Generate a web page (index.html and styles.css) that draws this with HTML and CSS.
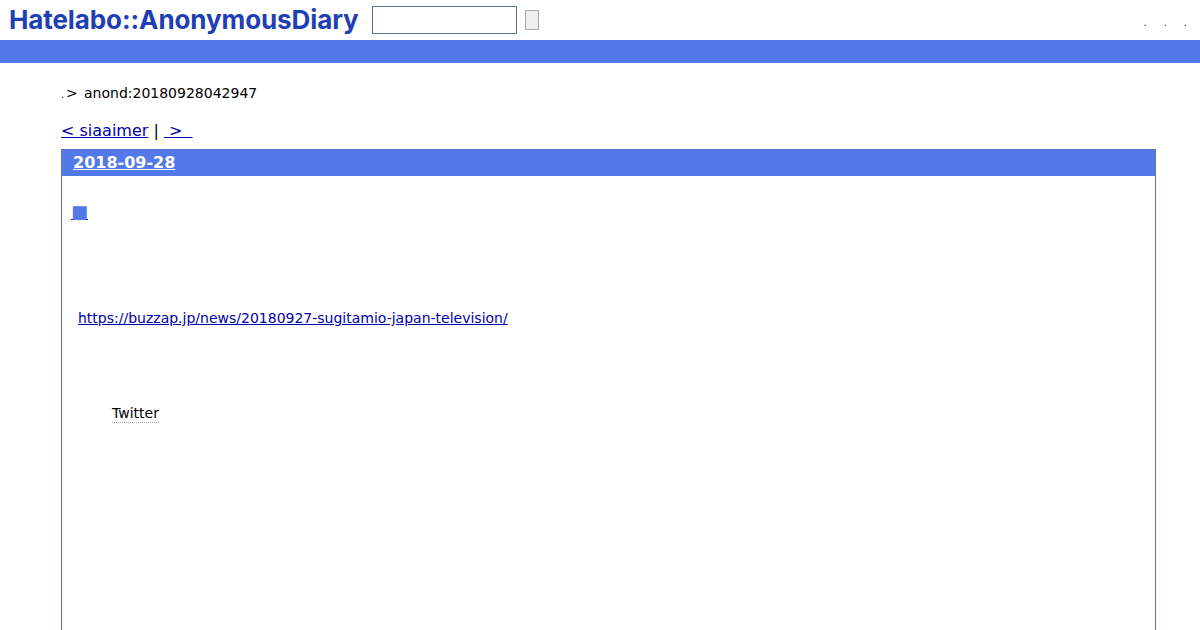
FILE: index.html
```html
<!DOCTYPE html>
<html lang="ja">

<head>
    <meta charset="utf-8">
    <title>anond:20180928042947</title>
    <link rel="stylesheet" href="styles.css">
</head>

<body>
    <div id="header">
        <a class="logo" href="#">Hatelabo::AnonymousDiary</a>
        <form class="search">
            <input type="text" class="search-text">
            <input type="submit" class="search-btn" value="">
        </form>
        <ul class="menu">
            <li><a href="#">.</a></li>
            <li><a href="#">.</a></li>
            <li><a href="#">.</a></li>
        </ul>
    </div>
    <div id="bar"></div>

    <div id="main">
        <p class="crumb"><span class="dot">.</span><span class="gt">&gt;</span><span>anond:20180928042947</span></p>
        <p class="pager"><a href="#">&lt; siaaimer</a> | <a href="#">&nbsp;&gt;&nbsp;&nbsp;</a></p>

        <div class="day">
            <h2 class="day-title"><a href="#">2018-09-28</a></h2>
            <div class="section">
                <h3 class="entry-title"><a href="#"><span class="sq">■</span></a></h3>
                <p class="url"><a href="#">https://buzzap.jp/news/20180927-sugitamio-japan-television/</a></p>
                <p class="tw"><span>Twitter</span></p>
            </div>
        </div>
    </div>
</body>

</html>
```

FILE: styles.css
```css
* {
    margin: 0;
    padding: 0;
    box-sizing: border-box;
}

html, body {
    height: 630px;
    overflow: hidden;
}

body {
    font: 14px/1.2 "DejaVu Sans", sans-serif;
    color: #000;
    background: #fff;
}

a {
    color: #00a;
}

#header {
    height: 40px;
    display: flex;
    align-items: flex-start;
    padding-left: 9px;
}

.logo {
    width: 350px;
    font: 700 26px/39px "Inter", sans-serif;
    letter-spacing: -0.1px;
    color: #1f3fb5;
    text-decoration: none;
    white-space: nowrap;
}

.search {
    display: flex;
    align-items: center;
    gap: 8px;
    margin: 6px 0 0 13px;
}

.search-text {
    width: 145px;
    height: 28px;
    border: 1px solid #5a7498;
    background: #fff;
}

.search-btn {
    width: 14px;
    height: 20px;
    border: 1px solid #aaa;
    background: #efefef;
}

.menu {
    display: flex;
    gap: 17px;
    list-style: none;
    margin: 13px 13px 0 auto;
}

.menu a {
    font-size: 10px;
    color: #222;
    text-decoration: none;
}

#bar {
    height: 23px;
    background: #5279e7;
}

#main {
    padding: 21px 44px 0 61px;
}

.crumb {
    display: flex;
    height: 18px;
    line-height: 18px;
}

.dot {
    font-size: 10px;
    line-height: 22px;
    width: 5px;
}

.gt {
    width: 18px;
}

.pager {
    margin-top: 19px;
    font-size: 16px;
    line-height: 20px;
}

.day {
    height: 500px;
    margin-top: 8px;
    border: 1px solid #5a74b8;
}

.day-title {
    height: 26px;
    padding-left: 11px;
    background: #5279e7;
    font-size: 16px;
    line-height: 26px;
}

.day-title a {
    color: #fff;
}

.section {
    padding: 26px 10px 0 9px;
}

.entry-title {
    font-size: 18px;
    line-height: 20px;
    font-weight: 400;
}

.entry-title a {
    color: #00a;
}

.sq {
    color: #5279e7;
}

.url {
    margin: 88px 0 0 7px;
    line-height: 17px;
}

.tw {
    margin: 78px 0 0 41px;
    line-height: 17px;
}

.tw span {
    display: inline-block;
    border-bottom: 1px dotted #aaa;
}
```
